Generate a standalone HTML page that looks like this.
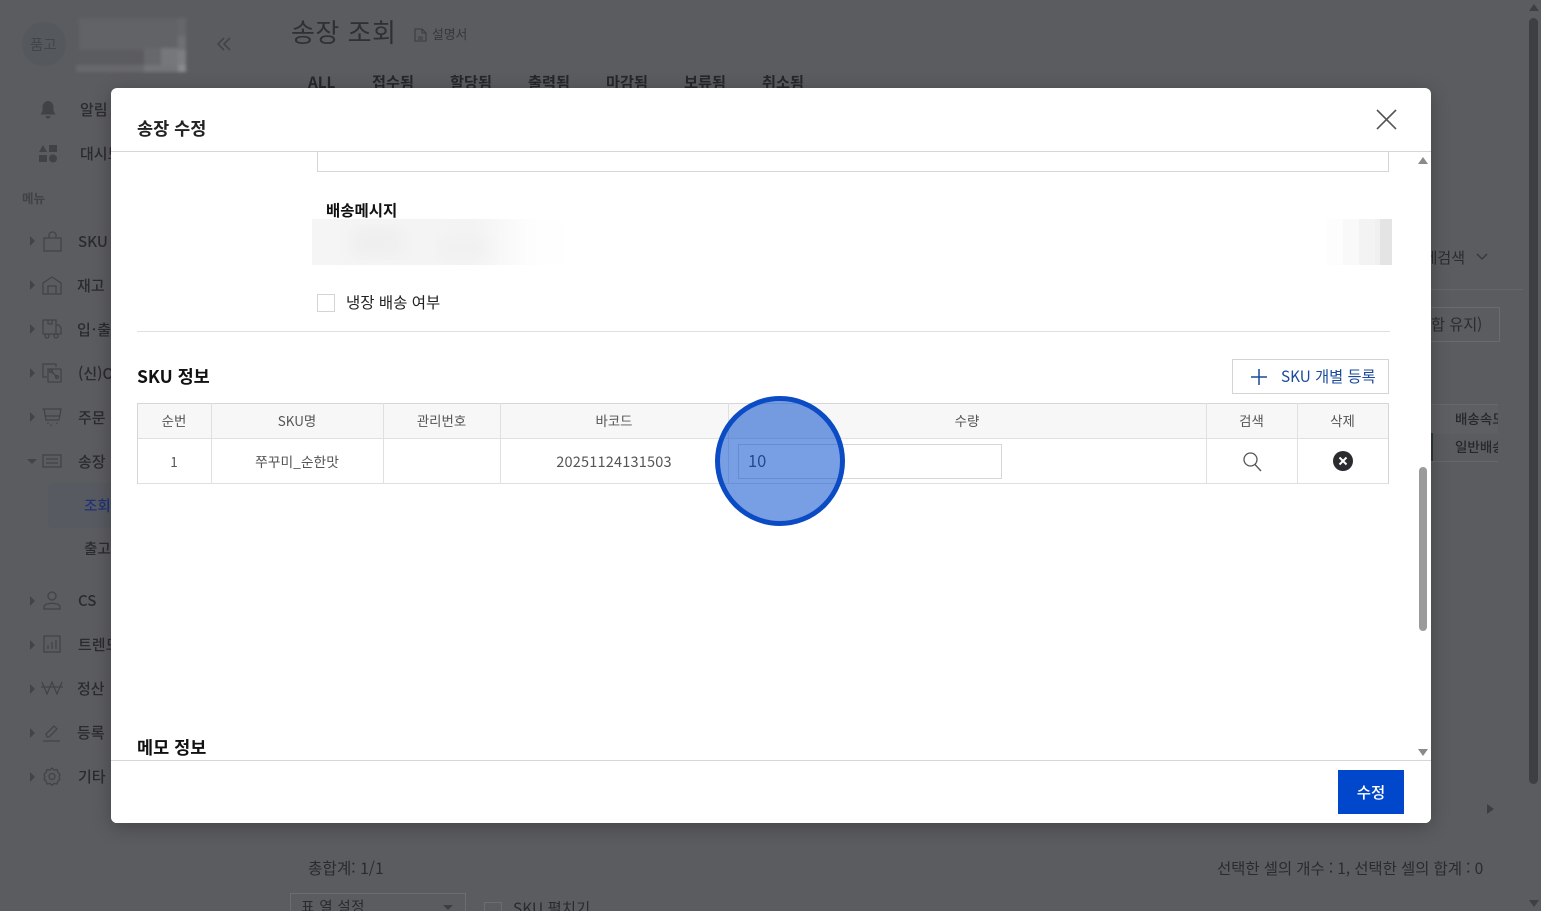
<!DOCTYPE html>
<html lang="ko"><head><meta charset="utf-8"><title>송장 수정</title>
<style>
html,body{margin:0;padding:0;width:1541px;height:911px;overflow:hidden;background:#5b5c60}
body{position:relative;font-family:"Liberation Sans","Noto Sans CJK KR",sans-serif;color:#2b2c30}
.t{position:absolute;white-space:nowrap;font-family:"Noto Sans CJK KR","Liberation Sans",sans-serif;line-height:20px;transform:translateY(-10px)}
.ic{position:absolute;fill:none;stroke:#424347;stroke-width:1.3}
.tri{position:absolute;width:0;height:0;border-top:5px solid transparent;border-bottom:5px solid transparent;border-left:5px solid #434448}
.m{font-size:15px;font-weight:500;color:#2a2b2f}
.tab{font-size:15.200px;font-weight:700;color:#26272a}
#modal{position:absolute;left:111px;top:88px;width:1320px;height:735px;background:#fff;border-radius:6px;overflow:hidden;box-shadow:0 4px 18px rgba(0,0,0,.25)}
#modal .t{color:#222}
.l{position:absolute;background:#d6d6d6}
.th{font-size:13.400px;color:#555!important;text-align:center}
.td{font-size:13px;color:#555!important;text-align:center}
</style></head><body>

<!-- background page -->
<div style="position:absolute;left:22px;top:22px;width:44px;height:44px;border-radius:50%;background:#55585d"></div>
<div class="t" style="left:30px;top:45px;font-size:14.500px;color:#44454a">품고</div>
<svg style="position:absolute;left:76px;top:18px;filter:blur(1.500px)" width="110" height="54">
<rect x="0" y="0" width="110" height="54" fill="#5b5c60"/><rect x="3" y="0" width="100" height="32" fill="#626367"/>
<rect x="68" y="30" width="17" height="17" fill="#67686c"/><rect x="85" y="30" width="17" height="17" fill="#76777b"/><rect x="102" y="0" width="8" height="18" fill="#66676b"/><rect x="102" y="18" width="8" height="14" fill="#6f7074"/><rect x="102" y="32" width="8" height="15" fill="#7d7e82"/>
<rect x="0" y="47" width="70" height="7" fill="#68696d"/><rect x="68" y="47" width="34" height="7" fill="#747579"/><rect x="102" y="47" width="8" height="7" fill="#8a8b8f"/></svg>
<svg class="ic" style="left:217px;top:37px;stroke:#3f4044;stroke-width:1.5" width="14" height="14"><path d="M7 1L1 7l6 6M13 1L7 7l6 6"/></svg>

<div class="t" style="left:291px;top:32px;font-size:26px;letter-spacing:.5px;color:#2f3034">송장 조회</div>
<svg class="ic" style="left:414px;top:28px;stroke:#3b3c40;stroke-width:1.1" width="13" height="14"><path d="M1 1h7l4 4v8H1zM8 1v4h4M4 9h5M4 11h5"/></svg>
<div class="t" style="left:432px;top:34px;font-size:12.800px;color:#36373b">설명서</div>
<div class="t tab" style="left:308px;top:82px">ALL</div>
<div class="t tab" style="left:372px;top:82px">접수됨</div>
<div class="t tab" style="left:450px;top:82px">할당됨</div>
<div class="t tab" style="left:528px;top:82px">출력됨</div>
<div class="t tab" style="left:606px;top:82px">마감됨</div>
<div class="t tab" style="left:684px;top:82px">보류됨</div>
<div class="t tab" style="left:762px;top:82px">취소됨</div>

<!-- sidebar -->
<svg style="position:absolute;left:39px;top:101px" width="18" height="18" fill="#414246"><path d="M9 0c3 0 5.500 2.500 5.500 6v4l2 3.500H1.500l2-3.500V6C3.500 2.500 6 0 9 0zM6.500 15h5c-.4 1.700-1.300 2.500-2.500 2.500S6.900 16.700 6.500 15z"/></svg>
<div class="t m" style="left:80px;top:110px">알림</div>
<svg style="position:absolute;left:39px;top:145px" width="18" height="18" fill="#414246"><path d="M4 0l4 7H0z"/><rect x="10" y="0" width="8" height="7"/><rect x="0" y="10" width="8" height="7"/><circle cx="14" cy="13.500" r="4"/></svg>
<div class="t m" style="left:80px;top:154px">대시보드</div>
<div class="t" style="left:22px;top:198px;font-size:12.500px;font-weight:700;color:#414246">메뉴</div>

<div class="tri" style="left:30px;top:236px"></div>
<svg class="ic" style="left:43px;top:231px" width="19" height="21"><path d="M1 7h17v13H1zM6 7V4c0-4 7-4 7 0v3"/></svg>
<div class="t m" style="left:78px;top:242px">SKU</div>
<div class="tri" style="left:30px;top:280px"></div>
<svg class="ic" style="left:42px;top:276px" width="20" height="19"><path d="M1 18V7l9-6 9 6v11zM6 18V10h8v8"/></svg>
<div class="t m" style="left:77px;top:286px">재고</div>
<div class="tri" style="left:30px;top:324px"></div>
<svg class="ic" style="left:41px;top:319px" width="21" height="20"><path d="M2 15V1h13v14M15 6h3l2 3v6H2"/><circle cx="6" cy="17" r="2"/><circle cx="15" cy="17" r="2"/><path d="M7 1v4h4V1"/></svg>
<div class="t m" style="left:77px;top:330px;letter-spacing:1px">입·출고</div>
<div class="tri" style="left:30px;top:368px"></div>
<svg class="ic" style="left:42px;top:363px" width="20" height="20"><path d="M14 4V1H1v13h4M6 6h13v13H6z"/><path d="M9 8l6 6"/><circle cx="9" cy="8" r="1.500"/><circle cx="15" cy="14" r="1.500"/></svg>
<div class="t m" style="left:78px;top:374px">(신)OMS</div>
<div class="tri" style="left:30px;top:412px"></div>
<svg class="ic" style="left:42px;top:407px;stroke-linecap:round" width="20" height="20"><path d="M1 2h18l-2 11H4L2 2M4 9h14M6 16v.5M9 18v.5M15 16v.5"/></svg>
<div class="t m" style="left:78px;top:418px">주문</div>
<div style="position:absolute;left:27px;top:459px;width:0;height:0;border-left:5px solid transparent;border-right:5px solid transparent;border-top:5px solid #434448"></div>
<svg class="ic" style="left:42px;top:454px" width="20" height="14"><path d="M1 1h18v12H1zM4 5h12M4 9h12"/></svg>
<div class="t m" style="left:78px;top:462px">송장</div>
<div style="position:absolute;left:48px;top:483px;width:70px;height:45px;border-radius:5px;background:#575a60"></div>
<div class="t" style="left:84px;top:506px;font-size:14.500px;font-weight:500;color:#1f3278">조회</div>
<div class="t" style="left:84px;top:549px;font-size:14.500px;font-weight:500;color:#2a2b2f">출고</div>
<div class="tri" style="left:30px;top:596px"></div>
<svg class="ic" style="left:43px;top:591px" width="18" height="19"><circle cx="9" cy="5" r="4"/><path d="M1 18v-2c0-5 16-5 16 0v2z"/></svg>
<div class="t m" style="left:78px;top:601px">CS</div>
<div class="tri" style="left:30px;top:640px"></div>
<svg class="ic" style="left:43px;top:635px" width="18" height="18"><path d="M1 1h16v16H1zM5 14v-4M9 14V7M13 14V5"/></svg>
<div class="t m" style="left:78px;top:645px">트렌드</div>
<div class="tri" style="left:30px;top:684px"></div>
<svg class="ic" style="left:41px;top:681px" width="22" height="14"><path d="M1 1l5 12 5-12 5 12 5-12M0 6h22"/></svg>
<div class="t m" style="left:77px;top:689px">정산</div>
<div class="tri" style="left:30px;top:728px"></div>
<svg class="ic" style="left:42px;top:724px" width="19" height="18"><path d="M5 13l-1-3 8-8 3 3-8 8zM1 17h17"/></svg>
<div class="t m" style="left:77px;top:733px">등록</div>
<div class="tri" style="left:30px;top:772px"></div>
<svg class="ic" style="left:43px;top:767px" width="18" height="19"><path d="M9 1l2 2 3-.500 1 3 2 2-1 2.500 1 2-2 2-1 3-3-.500-2 2-2-2-3 .500-1-3-2-2 1-2-1-2.500 2-2 1-3 3 .500z"/><circle cx="9" cy="9.500" r="3"/></svg>
<div class="t m" style="left:78px;top:777px">기타</div>

<!-- right background -->
<div class="t" style="left:1431px;top:258px;font-size:15px;color:#2a2b2f;width:34px;overflow:hidden;direction:rtl">상세검색</div>
<svg class="ic" style="left:1476px;top:253px;stroke:#35363a" width="12" height="8"><path d="M1 1l5 5 5-5"/></svg>
<div style="position:absolute;left:1431px;top:289px;width:92px;height:1px;background:#65666a"></div>
<div style="position:absolute;left:1431px;top:307px;width:68px;height:33px;border:1px solid #6a6b6f;border-left:0"></div>
<div class="t" style="left:1431px;top:324px;font-size:15.200px;color:#2a2b2f">합 유지)</div>
<div style="position:absolute;left:1431px;top:404px;width:67px;height:29px;background:#5e5f63;border-top:1px solid #66676b"></div>
<div style="position:absolute;left:1431px;top:433px;width:2px;height:28px;background:#2f3a35"></div>
<div style="position:absolute;left:1431px;top:461px;width:67px;height:1px;background:#66676b"></div>
<div style="position:absolute;left:1455px;top:405px;width:43px;height:56px;overflow:hidden">
<div class="t" style="left:0;top:13px;font-size:13.500px;font-weight:500;color:#26272a">배송속도</div>
<div class="t" style="left:0;top:41px;font-size:13.500px;font-weight:500;color:#26272a">일반배송</div></div>
<div class="tri" style="left:1487px;top:804px;border-left-color:#3d3e42;border-left-width:7px"></div>
<div class="t" style="left:308px;top:868px;font-size:15.700px;color:#2a2b2f">총합계: 1/1</div>
<div class="t" style="left:1217px;top:868px;font-size:15.500px;letter-spacing:-.1px;color:#2a2b2f">선택한 셀의 개수 : 1, 선택한 셀의 합계 : 0</div>
<div style="position:absolute;left:290px;top:893px;width:174px;height:30px;border:1px solid #6c6d71"></div>
<div class="t" style="left:301px;top:907px;font-size:14.500px;color:#2a2b2f;letter-spacing:.4px">표 열 설정</div>
<div style="position:absolute;left:443px;top:905px;width:0;height:0;border-left:5px solid transparent;border-right:5px solid transparent;border-top:5px solid #3d3e42"></div>
<div style="position:absolute;left:484px;top:902px;width:16px;height:16px;border:1px solid #6c6d71"></div>
<div class="t" style="left:513px;top:908px;font-size:15.500px;color:#2a2b2f">SKU 펼치기</div>

<!-- page scrollbar -->
<div style="position:absolute;left:1529px;top:18px;width:9px;height:766px;border-radius:5px;background:#3e3f43"></div>
<div style="position:absolute;left:1529px;top:4px;width:0;height:0;border-left:5px solid transparent;border-right:5px solid transparent;border-bottom:7px solid #3e3f43"></div>
<div style="position:absolute;left:1529px;top:900px;width:0;height:0;border-left:5px solid transparent;border-right:5px solid transparent;border-top:7px solid #3e3f43"></div>

<!-- modal -->
<div id="modal">
<div class="t" style="left:26px;top:41px;font-size:17.500px;font-weight:700;color:#222">송장 수정</div>
<svg style="position:absolute;left:1265px;top:21px" width="21" height="21" fill="none" stroke="#555" stroke-width="1.600"><path d="M1 1l19 19M20 1L1 20"/></svg>
<div class="l" style="left:0;top:63px;width:1320px;height:1px"></div>

<div style="position:absolute;left:206px;top:64px;width:1070px;height:19px;border:1px solid #d6d6d6;border-top:0"></div>
<div class="t" style="left:215px;top:122px;font-size:15.500px;font-weight:700;color:#111">배송메시지</div>
<svg style="position:absolute;left:201px;top:131px" width="1080" height="46">
<defs><linearGradient id="g" x1="0" x2="1"><stop offset="0" stop-color="#f5f5f5"/><stop offset=".15" stop-color="#f3f3f3"/><stop offset=".2" stop-color="#fdfdfd"/><stop offset=".24" stop-color="#fff"/></linearGradient><filter id="b"><feGaussianBlur stdDeviation="7"/></filter></defs>
<rect width="1080" height="46" fill="url(#g)"/>
<g filter="url(#b)"><rect x="40" y="8" width="50" height="30" fill="#efefef"/><rect x="130" y="22" width="45" height="14" fill="#f0f0f0"/></g>
<rect x="1015" width="16" height="46" fill="#fdfdfd"/><rect x="1031" width="16" height="46" fill="#f9f9f9"/><rect x="1047" width="16" height="46" fill="#f3f3f3"/><rect x="1063" width="5" height="46" fill="#f0f0f0"/><rect x="1068" width="12" height="46" fill="#e4e4e4"/></svg>
<div style="position:absolute;left:206px;top:206px;width:16px;height:16px;border:1px solid #d4d4d4"></div>
<div class="t" style="left:235px;top:214px;font-size:15.500px;color:#222">냉장 배송 여부</div>
<div class="l" style="left:26px;top:243px;width:1253px;height:1px;background:#e0e0e0"></div>

<div class="t" style="left:26px;top:289px;font-size:17.500px;font-weight:700;color:#111">SKU 정보</div>
<div style="position:absolute;left:1121px;top:271px;width:155px;height:33px;border:1px solid #d4d4d4"></div>
<svg style="position:absolute;left:1139px;top:280px" width="18" height="18" stroke="#1a4a9c" stroke-width="1.500"><path d="M9 1v16M1 9h16"/></svg>
<div class="t" style="left:1170px;top:288px;font-size:15.300px"><span style="color:#1a4a9c">SKU 개별 등록</span></div>

<!-- table -->
<div style="position:absolute;left:26px;top:315px;width:1251px;height:35px;background:#f7f7f7"></div>
<div class="l" style="left:26px;top:315px;width:1252px;height:1px"></div>
<div class="l" style="left:26px;top:350px;width:1252px;height:1px;background:#e0e0e0"></div>
<div class="l" style="left:26px;top:395px;width:1252px;height:1px;background:#e0e0e0"></div>
<div class="l" style="left:26px;top:315px;width:1px;height:81px"></div>
<div class="l" style="left:100px;top:315px;width:1px;height:81px;background:#e0e0e0"></div>
<div class="l" style="left:272px;top:315px;width:1px;height:81px;background:#e0e0e0"></div>
<div class="l" style="left:389px;top:315px;width:1px;height:81px;background:#e0e0e0"></div>
<div class="l" style="left:617px;top:315px;width:1px;height:81px;background:#e0e0e0"></div>
<div class="l" style="left:1095px;top:315px;width:1px;height:81px;background:#e0e0e0"></div>
<div class="l" style="left:1186px;top:315px;width:1px;height:81px;background:#e0e0e0"></div>
<div class="l" style="left:1277px;top:315px;width:1px;height:81px"></div>
<div class="t th" style="left:26px;width:74px;top:332px">순번</div>
<div class="t th" style="left:100px;width:172px;top:332px">SKU명</div>
<div class="t th" style="left:272px;width:117px;top:332px">관리번호</div>
<div class="t th" style="left:389px;width:228px;top:332px">바코드</div>
<div class="t th" style="left:617px;width:478px;top:332px">수량</div>
<div class="t th" style="left:1095px;width:91px;top:332px">검색</div>
<div class="t th" style="left:1186px;width:91px;top:332px">삭제</div>
<div class="t td" style="left:26px;width:74px;top:373px;font-size:13.500px">1</div>
<div class="t td" style="left:100px;width:172px;top:373px;font-size:13.800px">쭈꾸미_순한맛</div>
<div class="t td" style="left:389px;width:228px;top:374px;font-size:14.500px;letter-spacing:.2px">20251124131503</div>
<div style="position:absolute;left:627px;top:356px;width:262px;height:33px;border:1px solid #d6d6d6"></div>
<div class="t" style="left:637px;top:372px;font-size:16.500px;color:#444!important">10</div>
<svg style="position:absolute;left:1132px;top:364px" width="19" height="20" fill="none" stroke="#555" stroke-width="1.300"><circle cx="7.500" cy="7.500" r="6.500"/><path d="M12 12.500l6 6.500"/></svg>
<svg style="position:absolute;left:1222px;top:363px" width="20" height="20"><circle cx="10" cy="10" r="10" fill="#2a2b2e"/><path d="M6.500 6.500l7 7M13.500 6.500l-7 7" stroke="#fff" stroke-width="2"/></svg>

<div class="t" style="left:26px;top:660px;font-size:17.500px;font-weight:700;color:#111">메모 정보</div>
<div class="l" style="left:0;top:672px;width:1320px;height:1px"></div>
<div style="position:absolute;left:0;top:673px;width:1320px;height:62px;background:#fff"></div>
<div style="position:absolute;left:1227px;top:682px;width:66px;height:44px;background:#0047cc"></div>
<div class="t" style="left:1227px;width:66px;text-align:center;top:704px;font-size:15.500px;font-weight:500"><span style="color:#fff">수정</span></div>

<!-- modal scrollbar -->
<div style="position:absolute;left:1307px;top:69px;width:0;height:0;border-left:5px solid transparent;border-right:5px solid transparent;border-bottom:7px solid #8a8a8a"></div>
<div style="position:absolute;left:1308px;top:379px;width:8px;height:164px;border-radius:4px;background:#9b9b9b"></div>
<div style="position:absolute;left:1307px;top:661px;width:0;height:0;border-left:5px solid transparent;border-right:5px solid transparent;border-top:7px solid #8a8a8a"></div>
</div>

<!-- click highlight -->
<div style="position:absolute;left:715px;top:396px;width:120px;height:120px;border:5px solid #0b4cc4;border-radius:50%;background:rgba(10,79,206,.55)"></div>
</body></html>
